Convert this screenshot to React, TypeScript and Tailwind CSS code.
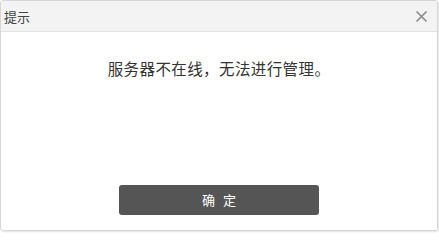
export default function App() {
  return (
    <div
      className="w-[439px] h-[234px] bg-white"
      style={{ fontFamily: '"Noto Sans CJK SC", "Noto Sans", sans-serif' }}
    >
      <div className="w-[438px] h-[231px] border border-[#d6d6d6] rounded-[3px] shadow-[1px_1px_2px_rgba(0,0,0,0.12)] flex flex-col overflow-hidden">
        <div className="h-[31px] shrink-0 bg-[#f3f3f3] border-b border-[#e2e2e2] flex items-center justify-between pl-[3px] pr-[9px]">
          <span className="text-[13px] text-[#444] leading-none">提示</span>
          <svg width="13" height="13" viewBox="0 0 13 13" className="text-[#8c8c8c]">
            <path d="M1.5 1.5 L11.5 11.5 M11.5 1.5 L1.5 11.5" stroke="currentColor" strokeWidth="1.7" />
          </svg>
        </div>
        <div className="flex-1 flex flex-col items-center">
          <p className="pt-[26px] text-[15.5px] leading-[20px] text-[#333] tracking-[0.4px]">
            服务器不在线，无法进行管理。
          </p>
          <button className="mt-auto mb-[15px] w-[200px] h-[30px] rounded-[3px] bg-[#555] text-white text-[13px] tracking-[8px] pl-[8px]">
            确定
          </button>
        </div>
      </div>
    </div>
  );
}
